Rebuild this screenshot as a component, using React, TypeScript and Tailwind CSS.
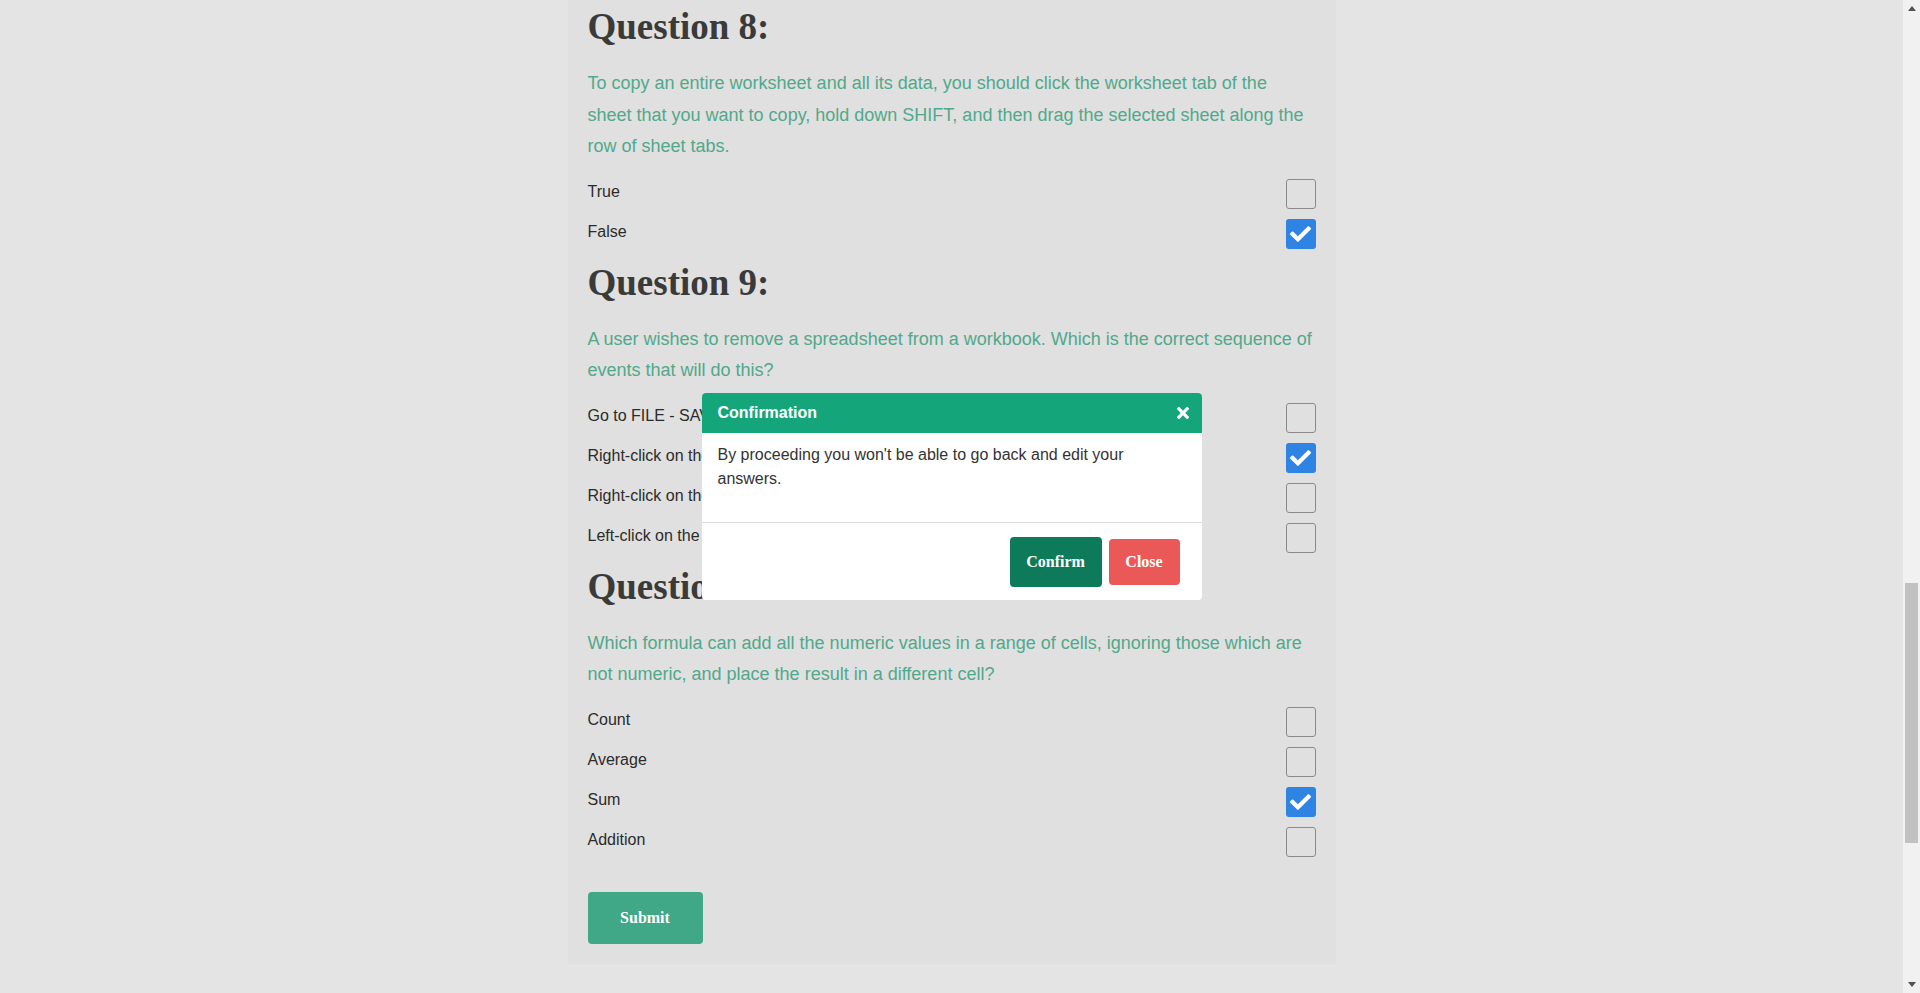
import React from 'react'

type Question = {
  num: number
  text: string
  options: string[]
  picked: number
}

const QUESTIONS: Question[] = [
  {
    num: 8,
    text: 'To copy an entire worksheet and all its data, you should click the worksheet tab of the sheet that you want to copy, hold down SHIFT, and then drag the selected sheet along the row of sheet tabs.',
    options: ['True', 'False'],
    picked: 1,
  },
  {
    num: 9,
    text: 'A user wishes to remove a spreadsheet from a workbook. Which is the correct sequence of events that will do this?',
    options: [
      'Go to FILE - SAVE AS - SAVE AS TYPE - Excel Worksheet',
      'Right-click on the spreadsheet tab and select DELETE',
      'Right-click on the spreadsheet tab and select INSERT',
      'Left-click on the spreadsheet tab and select DELETE',
    ],
    picked: 1,
  },
  {
    num: 10,
    text: 'Which formula can add all the numeric values in a range of cells, ignoring those which are not numeric, and place the result in a different cell?',
    options: ['Count', 'Average', 'Sum', 'Addition'],
    picked: 2,
  },
]

function CheckBox({ checked }: { checked: boolean }) {
  if (!checked) {
    return <span className="h-[30px] w-[30px] shrink-0 rounded-[3px] border border-[#8a8a8a]" />
  }
  return (
    <span className="flex h-[30px] w-[30px] shrink-0 items-center justify-center rounded-[3px] bg-[#2f84e3]">
      <svg viewBox="0 64 512 384" className="h-[16px] w-[21px]" fill="#ffffff">
        <path d="M173.898 439.404l-166.4-166.4c-9.997-9.997-9.997-26.206 0-36.204l36.203-36.204c9.997-9.998 26.207-9.998 36.204 0L192 312.69 432.095 72.596c9.997-9.997 26.207-9.997 36.204 0l36.203 36.204c9.997 9.997 9.997 26.206 0 36.204l-294.4 294.401c-9.998 9.997-26.207 9.997-36.204-.001z" />
      </svg>
    </span>
  )
}

function QuestionBlock({ q, first }: { q: Question; first: boolean }) {
  return (
    <section className={first ? '' : 'mt-3'}>
      <h2 className="font-['Liberation_Serif',serif] text-[37px] leading-[44px] font-bold text-[#3a3a3a]">
        Question {q.num}:
      </h2>
      <p className="mt-[19px] mb-4 text-[18px] leading-[31.5px] text-[#52a88b]">{q.text}</p>
      <ul className="flex flex-col gap-[10px]">
        {q.options.map((opt, i) => (
          <li key={opt} className="flex h-[30px] items-center justify-between">
            <span className="-mt-[3px] text-base text-[#2b2b2b]">{opt}</span>
            <CheckBox checked={i === q.picked} />
          </li>
        ))}
      </ul>
    </section>
  )
}

function ScrollBar() {
  return (
    <div className="flex h-screen w-[17px] shrink-0 flex-col bg-[#f1f1f1]">
      <div className="flex h-[17px] items-center justify-center">
        <svg width="8" height="5" viewBox="0 0 8 5">
          <polygon points="4,0 8,5 0,5" fill="#505050" />
        </svg>
      </div>
      <div className="flex-1 px-[2px]">
        <div className="mt-[566px] h-[260px] w-[13px] bg-[#c1c1c1]" />
      </div>
      <div className="flex h-[17px] items-center justify-center">
        <svg width="8" height="5" viewBox="0 0 8 5">
          <polygon points="0,0 8,0 4,5" fill="#505050" />
        </svg>
      </div>
    </div>
  )
}

function ConfirmModal() {
  return (
    <div className="fixed inset-y-0 right-[17px] left-0 flex items-center justify-center">
      <div className="w-[500px] overflow-hidden rounded-[4px] bg-white">
        <div className="flex h-10 items-center justify-between bg-[#14a67a] pr-[13px] pl-4">
          <span className="text-base font-bold text-white">Confirmation</span>
          <svg viewBox="0 80 352 352" className="h-[12px] w-[12px]" fill="#ffffff">
            <path d="M242.72 256l100.07-100.07c12.28-12.28 12.28-32.19 0-44.48l-22.24-22.24c-12.28-12.28-32.19-12.28-44.48 0L176 189.28 75.93 89.21c-12.28-12.28-32.19-12.28-44.48 0L9.21 111.45c-12.28 12.28-12.28 32.19 0 44.48L109.28 256 9.21 356.07c-12.28 12.28-12.28 32.19 0 44.48l22.24 22.24c12.28 12.28 32.2 12.28 44.48 0L176 322.72l100.07 100.07c12.28 12.28 32.2 12.28 44.48 0l22.24-22.24c12.28-12.28 12.28-32.19 0-44.48L242.72 256z" />
          </svg>
        </div>
        <div className="px-4 pt-[10px] pb-[31px] text-base leading-6 text-[#333333]">
          By proceeding you won't be able to go back and edit your answers.
        </div>
        <div className="flex h-[78px] items-center justify-end gap-[7px] border-t border-[#dcdcdc] pr-[22px]">
          <button className="h-[50px] w-[92px] rounded-[4px] bg-[#0d7a5a] font-['Liberation_Serif',serif] text-base font-bold text-white">
            Confirm
          </button>
          <button className="h-[46px] w-[71px] rounded-[4px] bg-[#eb5858] font-['Liberation_Serif',serif] text-base font-bold text-white">
            Close
          </button>
        </div>
      </div>
    </div>
  )
}

export default function App() {
  return (
    <div className="flex h-screen overflow-hidden bg-[#e4e4e4] font-['Liberation_Sans',Arial,sans-serif]">
      <main className="flex-1">
        <div className="mx-auto mb-[29px] w-[768px] bg-[#e0e0e0] px-5 pt-[5px] pb-5">
          {QUESTIONS.map((q, i) => (
            <QuestionBlock key={q.num} q={q} first={i === 0} />
          ))}
          <button className="mt-[35px] h-[52px] w-[115px] rounded-[4px] bg-[#40a886] font-['Liberation_Serif',serif] text-base font-bold text-white">
            Submit
          </button>
        </div>
      </main>
      <ScrollBar />
      <ConfirmModal />
    </div>
  )
}
